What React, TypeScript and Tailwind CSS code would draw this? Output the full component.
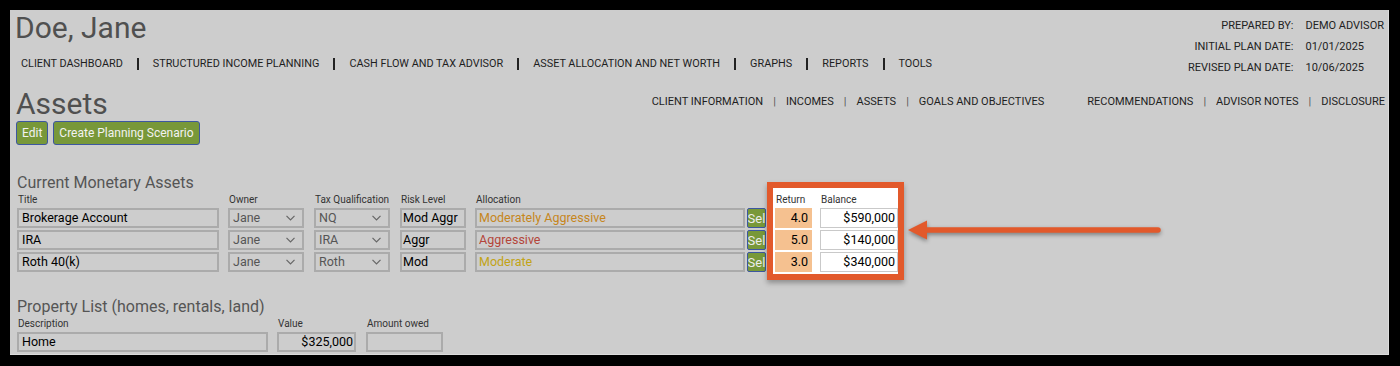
import type { ReactNode } from "react";

type Holding = {
  title: string;
  owner: string;
  tax: string;
  risk: string;
  allocation: string;
  allocationColor: string;
  ret: string;
  balance: string;
};

const holdings: Holding[] = [
  {
    title: "Brokerage Account",
    owner: "Jane",
    tax: "NQ",
    risk: "Mod Aggr",
    allocation: "Moderately Aggressive",
    allocationColor: "text-[#c6861c]",
    ret: "4.0",
    balance: "$590,000",
  },
  {
    title: "IRA",
    owner: "Jane",
    tax: "IRA",
    risk: "Aggr",
    allocation: "Aggressive",
    allocationColor: "text-[#b4453a]",
    ret: "5.0",
    balance: "$140,000",
  },
  {
    title: "Roth 40(k)",
    owner: "Jane",
    tax: "Roth",
    risk: "Mod",
    allocation: "Moderate",
    allocationColor: "text-[#c2a316]",
    ret: "3.0",
    balance: "$340,000",
  },
];

const mainNav = [
  "CLIENT DASHBOARD",
  "STRUCTURED INCOME PLANNING",
  "CASH FLOW AND TAX ADVISOR",
  "ASSET ALLOCATION AND NET WORTH",
  "GRAPHS",
  "REPORTS",
  "TOOLS",
];

const subNavLeft = ["CLIENT INFORMATION", "INCOMES", "ASSETS", "GOALS AND OBJECTIVES"];
const subNavRight = ["RECOMMENDATIONS", "ADVISOR NOTES", "DISCLOSURE"];

const fieldBox = "h-[20px] border-2 border-[#ababab] bg-[#cdcdcd] flex items-center text-[12.5px] leading-[16px]";

function Column({
  label,
  className = "",
  children,
}: {
  label?: string;
  className?: string;
  children: ReactNode;
}) {
  return (
    <div className={`flex flex-col ${className}`}>
      <div className="mt-[2px] h-[12px] pl-[1px] text-[10px] leading-[12px] text-[#333]">{label}</div>
      <div className="mt-[2px] flex flex-col gap-[2px]">{children}</div>
    </div>
  );
}

function SelectBox({ value }: { value: string }) {
  return (
    <div className={`${fieldBox} justify-between pl-[3px] pr-[7px] text-[#555]`}>
      <span>{value}</span>
      <svg width="9" height="6" viewBox="0 0 9 6" fill="none" stroke="#666" strokeWidth="1.2">
        <polyline points="0.5,0.8 4.5,4.8 8.5,0.8" />
      </svg>
    </div>
  );
}

function SubNav({ items }: { items: string[] }) {
  return (
    <div className="flex items-center">
      {items.map((item, i) => (
        <span key={item} className="flex items-center">
          {i > 0 ? <span className="mx-[10px] text-[#555]">|</span> : null}
          <span>{item}</span>
        </span>
      ))}
    </div>
  );
}

function SectionTitle({ children, className = "" }: { children: ReactNode; className?: string }) {
  return <h2 className={`text-[16px] leading-[19px] text-[#555] ${className}`}>{children}</h2>;
}

export default function App() {
  return (
    <div className="h-[366px] w-[1400px] bg-black pl-[10px] pt-[10px] font-['Roboto',sans-serif]">
      <div className="relative h-[345px] w-[1379px] border-b border-r border-[#dcdcdc] bg-[#cdcdcd] pl-[7px]">
        <header className="flex items-start justify-between">
          <div>
            <h1 className="-ml-[2px] text-[30px] leading-[36px] text-[#505050]">Doe, Jane</h1>
            <nav className="mt-[11px] flex items-center pl-[4px] text-[10.85px] leading-[14px] text-[#1e1e1e]">
              {mainNav.map((item, i) => (
                <span key={item} className="flex items-center">
                  {i > 0 ? <span className="mx-[14px] h-[12px] w-[2px] bg-[#222]" /> : null}
                  <span>{item}</span>
                </span>
              ))}
            </nav>
          </div>
          <div className="grid grid-cols-[auto_auto] gap-x-[12px] pr-[4px] pt-[5px] text-[11px] leading-[21px] text-[#222]">
            <span className="text-right">PREPARED BY:</span>
            <span>DEMO ADVISOR</span>
            <span className="text-right">INITIAL PLAN DATE:</span>
            <span>01/01/2025</span>
            <span className="text-right">REVISED PLAN DATE:</span>
            <span>10/06/2025</span>
          </div>
        </header>

        <div className="mt-[8px] flex items-start justify-between">
          <div>
            <h1 className="-ml-[1px] text-[30px] leading-[35px] text-[#505050]">Assets</h1>
            <div className="-ml-[1px] flex gap-[5px]">
              <button className="h-[24px] rounded-[3px] border border-[#3d57a0] bg-[#789839] px-[5px] text-[12px] text-[#f2f2f2]">
                Edit
              </button>
              <button className="h-[24px] rounded-[3px] border border-[#3d57a0] bg-[#789839] px-[5px] text-[12px] text-[#f2f2f2]">
                Create Planning Scenario
              </button>
            </div>
          </div>
          <div className="mt-[9px] flex items-center gap-[43px] pr-[3px] text-[11px] leading-[14px] text-[#1e1e1e]">
            <SubNav items={subNavLeft} />
            <SubNav items={subNavRight} />
          </div>
        </div>

        <SectionTitle className="mt-[28px]">Current Monetary Assets</SectionTitle>
        <div className="flex items-start">
          <Column label="Title" className="w-[202px]">
            {holdings.map((h) => (
              <div key={h.title} className={`${fieldBox} px-[3px] text-black`}>
                {h.title}
              </div>
            ))}
          </Column>
          <Column label="Owner" className="ml-[9px] w-[76px]">
            {holdings.map((h) => (
              <SelectBox key={h.title} value={h.owner} />
            ))}
          </Column>
          <Column label="Tax Qualification" className="ml-[10px] w-[76px]">
            {holdings.map((h) => (
              <SelectBox key={h.title} value={h.tax} />
            ))}
          </Column>
          <Column label="Risk Level" className="ml-[10px] w-[66px]">
            {holdings.map((h) => (
              <div key={h.title} className={`${fieldBox} bg-[#c5c5c5] pl-[1px] text-black`}>
                {h.risk}
              </div>
            ))}
          </Column>
          <Column label="Allocation" className="ml-[9px] w-[270px]">
            {holdings.map((h) => (
              <div key={h.title} className={`${fieldBox} pl-[2px] ${h.allocationColor}`}>
                {h.allocation}
              </div>
            ))}
          </Column>
          <Column className="ml-[2px] w-[19px]">
            {holdings.map((h) => (
              <button
                key={h.title}
                className="flex h-[20px] w-[19px] items-center justify-center overflow-hidden rounded-[2px] border border-[#3d57a0] bg-[#789839] text-[13px] leading-none text-[#ececec]"
              >
                Sel
              </button>
            ))}
          </Column>

          <div className="relative -mb-[2px] -mt-[4px] ml-[7px] flex gap-[8px] bg-white pb-[2px] pl-[2px] pt-[4px] shadow-[0_3px_5px_6px_rgba(0,0,0,0.3)] ring-[6px] ring-[#e2592b]">
            <Column label="Return" className="w-[37px]">
              {holdings.map((h) => (
                <div
                  key={h.title}
                  className="flex h-[20px] items-center justify-end bg-[#f5c190] pr-[4px] text-[12.5px] leading-[16px] text-black"
                >
                  {h.ret}
                </div>
              ))}
            </Column>
            <Column label="Balance" className="w-[78px]">
              {holdings.map((h) => (
                <div
                  key={h.title}
                  className="flex h-[20px] items-center justify-end border border-[#c9c9c9] bg-white pr-[2px] text-[12.5px] leading-[16px] text-black"
                >
                  {h.balance}
                </div>
              ))}
            </Column>
          </div>
        </div>

        <SectionTitle className="mt-[25px]">Property List (homes, rentals, land)</SectionTitle>
        <div className="flex items-start">
          <Column label="Description" className="w-[251px]">
            <div className={`${fieldBox} px-[3px] text-black`}>Home</div>
          </Column>
          <Column label="Value" className="ml-[9px] w-[79px]">
            <div className={`${fieldBox} justify-end pr-[1px] text-black`}>$325,000</div>
          </Column>
          <Column label="Amount owed" className="ml-[10px] w-[77px]">
            <div className={fieldBox} />
          </Column>
        </div>

        <svg
          className="absolute left-[893px] top-[205px] drop-shadow-[0_2px_2px_rgba(0,0,0,0.4)]"
          width="270"
          height="32"
          viewBox="0 0 270 32"
        >
          <line x1="20" y1="15" x2="255" y2="15" stroke="#e2592b" strokeWidth="5.5" strokeLinecap="round" />
          <polygon points="5,15 24,5.5 24,24.5" fill="#e2592b" />
        </svg>
      </div>
    </div>
  );
}
